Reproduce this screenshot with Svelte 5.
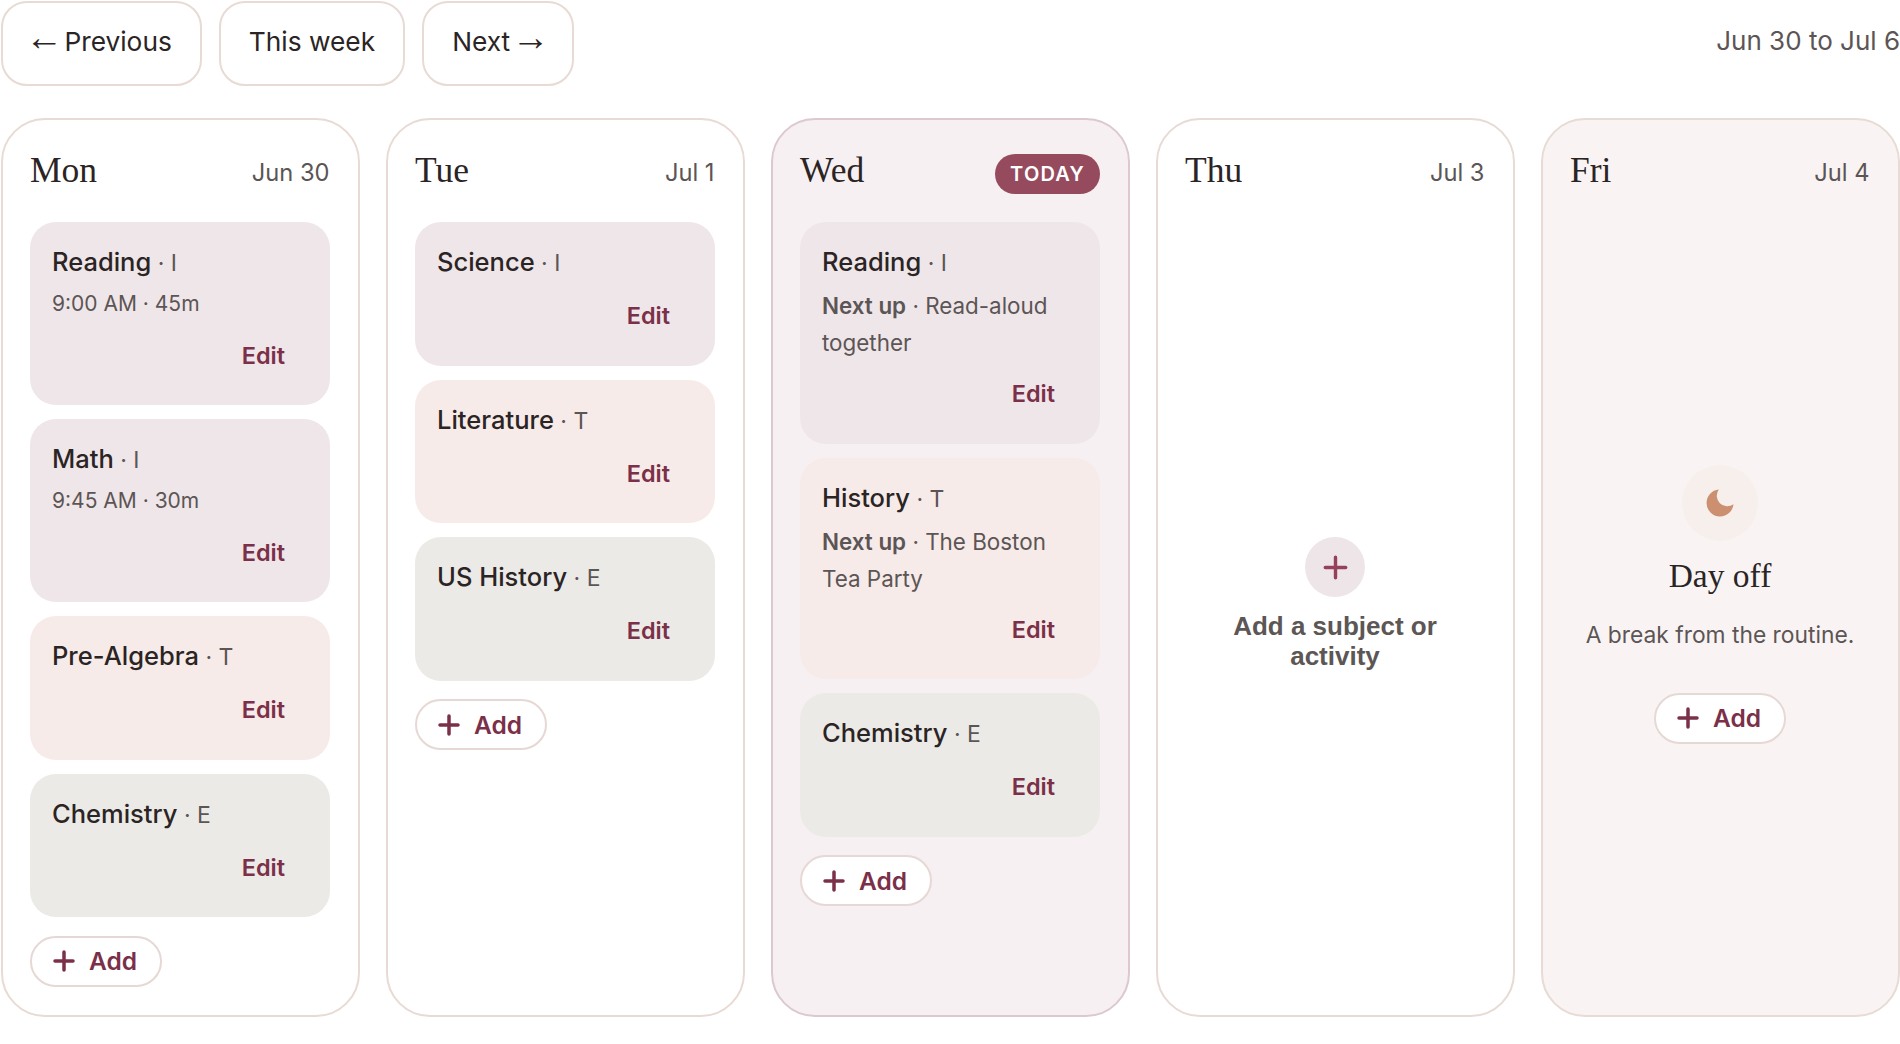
<script>
  const days = [
    { name: 'Mon', date: 'Jun 30', items: [
      { t: 'Reading', k: 'I', c: 'i', meta: '9:00 AM · 45m' },
      { t: 'Math', k: 'I', c: 'i', meta: '9:45 AM · 30m' },
      { t: 'Pre-Algebra', k: 'T', c: 't' },
      { t: 'Chemistry', k: 'E', c: 'e' } ] },
    { name: 'Tue', date: 'Jul 1', items: [
      { t: 'Science', k: 'I', c: 'i' },
      { t: 'Literature', k: 'T', c: 't' },
      { t: 'US History', k: 'E', c: 'e' } ] },
    { name: 'Wed', today: true, items: [
      { t: 'Reading', k: 'I', c: 'i', next: 'Read-aloud together' },
      { t: 'History', k: 'T', c: 't', next: 'The Boston Tea Party' },
      { t: 'Chemistry', k: 'E', c: 'e' } ] },
    { name: 'Thu', date: 'Jul 3', empty: true, items: [] },
    { name: 'Fri', date: 'Jul 4', off: true, items: [] }
  ];
</script>

{#snippet plus()}
  <svg class="plus" viewBox="0 0 22 22" aria-hidden="true"><path d="M11 2v18M2 11h18" /></svg>
{/snippet}

{#snippet addButton()}
  <button class="add">{@render plus()}<span>Add</span></button>
{/snippet}

<main class="page">
  <header class="topbar">
    <nav class="nav">
      <button class="navbtn"><span class="arrow">←</span> Previous</button>
      <button class="navbtn">This week</button>
      <button class="navbtn">Next <span class="arrow">→</span></button>
    </nav>
    <span class="range">Jun 30 to Jul 6</span>
  </header>

  <section class="week">
    {#each days as d}
      <article class="col" class:today={d.today} class:off={d.off}>
        <div class="colhead">
          <h2>{d.name}</h2>
          {#if d.today}<span class="pill">TODAY</span>{:else}<span class="date">{d.date}</span>{/if}
        </div>

        {#if d.empty}
          <div class="center">
            <div class="emptyicon">
              <svg viewBox="0 0 22 22" aria-hidden="true"><path d="M11 2v18M2 11h18" /></svg>
            </div>
            <p class="emptytext">Add a subject or activity</p>
          </div>
        {:else if d.off}
          <div class="center">
            <div class="moon">
              <svg viewBox="0 0 24 24" aria-hidden="true"><path d="M21 12.79A9 9 0 1 1 11.21 3 7 7 0 0 0 21 12.79z" /></svg>
            </div>
            <h3>Day off</h3>
            <p class="offtext">A break from the routine.</p>
            {@render addButton()}
          </div>
        {:else}
          <div class="list">
            {#each d.items as it}
              <div class="card {it.c}">
                <div class="title"><strong>{it.t}</strong><span>{' · ' + it.k}</span></div>
                {#if it.meta}<div class="meta">{it.meta}</div>{/if}
                {#if it.next}<div class="meta next"><b>Next up</b> · {it.next}</div>{/if}
                <button class="edit">Edit</button>
              </div>
            {/each}
          </div>
          <div class="addrow">{@render addButton()}</div>
        {/if}
      </article>
    {/each}
  </section>
</main>

<style>
  :global(body) { margin: 0; background: #fff; }
  .page {
    font-family: Inter, "Noto Sans", sans-serif;
    color: #2b2424;
    padding-left: 1px;
    box-sizing: border-box;
    width: 1900px;
  }
  button { font-family: inherit; cursor: pointer; }
  .topbar {
    display: flex; justify-content: space-between; align-items: flex-start; box-sizing: border-box;
    height: 86px; padding-top: 1px; margin-bottom: 32px;
  }
  .nav { display: flex; gap: 17px; }
  .navbtn {
    height: 85px; padding: 0 28px 4px; background: #fff; color: #2b2424; white-space: nowrap;
    border: 2px solid #e8dad4; border-radius: 26px; font-size: 26.3px; font-weight: 400;
  }
  .arrow { font-family: "Liberation Sans", sans-serif; font-size: 38px; line-height: 0; margin: 0 -6px; vertical-align: 1px; }
  .range { font-size: 26px; line-height: 80px; color: #5c5555; }

  .week { display: grid; grid-template-columns: repeat(5, 1fr); gap: 26px; }
  .col {
    display: flex; flex-direction: column; box-sizing: border-box; height: 899px;
    padding: 27px 28px 29px 27px; border: 2px solid #e8dad4; border-radius: 44px; background: #fff;
  }
  .col.today { background: #f7f0f3; border-color: #dcc9ce; }
  .col.off { background: #f9f4f3; }
  .colhead { display: flex; flex-shrink: 0; justify-content: space-between; align-items: center; height: 50px; margin-bottom: 25px; }
  h2 { margin: -4px 0 0; font: 400 35.5px/1.2 "Liberation Serif", serif; color: #2b2424; }
  .date { font-size: 23.7px; color: #5c5555; margin: 0 0.5px 0 0; }
  .pill {
    display: flex; align-items: center; height: 40px; padding: 0 15px; margin-top: 4px;
    border-radius: 20px; background: #964a5e; color: #fff;
    font-size: 20px; font-weight: 600; letter-spacing: 1.2px;
  }

  .list { display: flex; flex-direction: column; gap: 14px; }
  .card {
    display: flex; flex-direction: column; padding: 22px 22px 28px; border-radius: 26px;
  }
  .card.i { background: #efe6e9; }
  .card.t { background: #f6ebe8; }
  .card.e { background: #ebeae6; }
  .title { font-size: 25.5px; line-height: 36px; height: 36px; margin-bottom: 3px; color: #5c5555; font-weight: 400; }
  .title span { font-size: 23px; }
  .title strong { font-weight: 500; color: #2b2424; }
  .meta { font-size: 21px; line-height: 37.5px; margin-top: 2px; color: #5c5555; }
  .meta.next { font-size: 22.4px; line-height: 37px; margin-top: 4px; }
  .meta b { font-weight: 600; }
  .edit {
    align-self: flex-end; height: 44px; margin-top: 10.5px; padding: 0 23px; border: 0; background: none;
    color: #7b3049; font-size: 23.5px; font-weight: 600;
  }
  .addrow { margin-top: 18.5px; display: flex; flex-shrink: 0; }
  .add {
    display: inline-flex; align-items: center; gap: 14px; box-sizing: border-box; flex-shrink: 0;
    height: 51px; padding: 0 23px 0 21px; border: 2px solid #e6d8d4; border-radius: 26px;
    background: #fff; color: #7b3049; font-size: 24.5px; font-weight: 600;
  }
  .plus { width: 22px; height: 22px; }
  .plus path { stroke: #7b3049; stroke-width: 3.5; stroke-linecap: round; fill: none; }

  .center { flex: 1; display: flex; flex-direction: column; align-items: center; justify-content: center; text-align: center; }
  .emptyicon { width: 60px; height: 60px; border-radius: 50%; background: #ede5e8; display: flex; align-items: center; justify-content: center; }
  .emptyicon svg { width: 25px; height: 25px; }
  .emptyicon path { stroke: #96405c; stroke-width: 3; stroke-linecap: round; fill: none; }
  .emptytext { margin: 14px 0 0; font: 700 26px/30px "Liberation Sans", sans-serif; color: #5c5655; width: 240px; }
  .moon { width: 76px; height: 76px; border-radius: 50%; background: #f6efec; display: flex; align-items: center; justify-content: center; }
  .moon svg { width: 36px; height: 36px; }
  .moon path { fill: #cc8f70; }
  h3 { margin: 12px 0 0; font: 400 33.5px/46px "Liberation Serif", serif; color: #2b2424; }
  .offtext { margin: 18px 0 0; font-size: 22.8px; line-height: 36px; color: #5c5555; }
  .center .add { margin-top: 40px; }
</style>
